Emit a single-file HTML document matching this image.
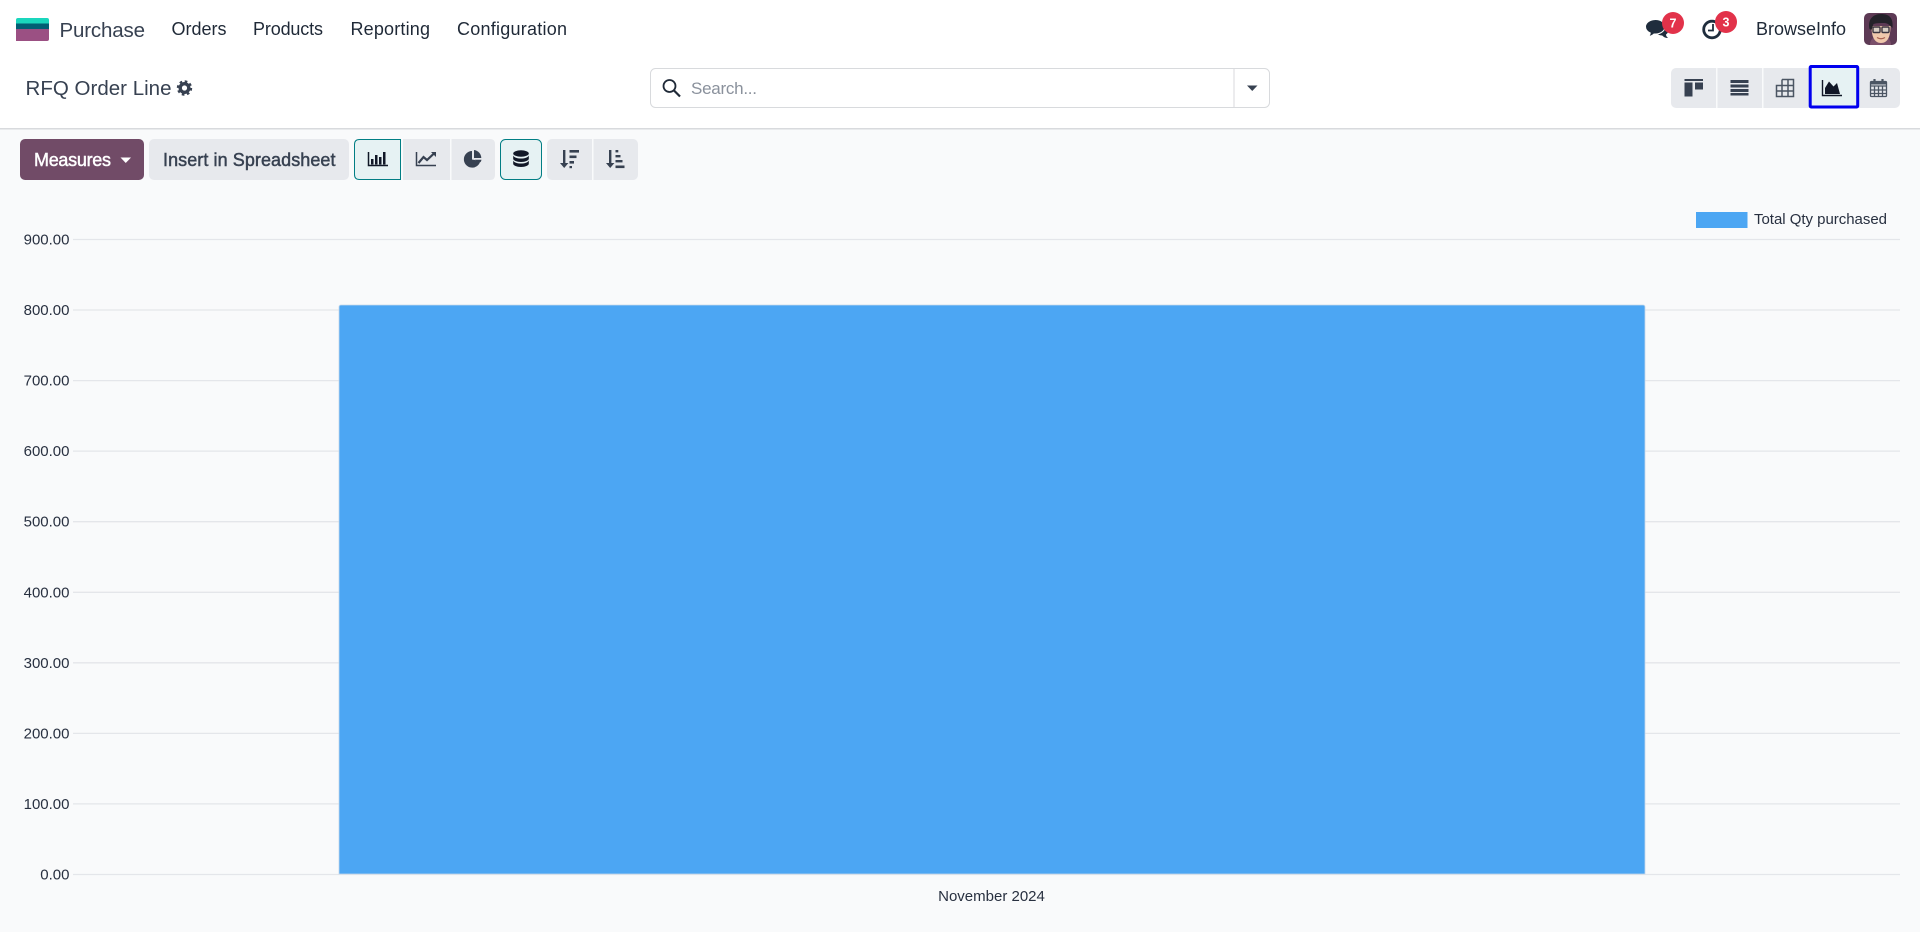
<!DOCTYPE html>
<html lang="en">
<head>
<meta charset="utf-8">
<title>RFQ Order Line</title>
<style>
html,body{margin:0;padding:0;width:1920px;height:932px;overflow:hidden;background:#f9fafb}
svg{display:block}
text{font-family:"Liberation Sans",sans-serif}
</style>
</head>
<body>
<svg xmlns="http://www.w3.org/2000/svg" width="1920" height="932" viewBox="0 0 1920 932">
  <rect width="1920" height="932" fill="#f9fafb"/>
  <rect width="1920" height="128" fill="#fff"/>
  <rect y="128" width="1920" height="1.5" fill="#d8dadd"/>

  <!-- logo -->
  <path d="M16 20q0-2 2-2h29q2 0 2 2v4H16z" fill="#1ad6bd"/>
  <rect x="16" y="23.5" width="33" height="6" fill="#015f74"/>
  <path d="M16 29h33v10q0 2-2 2H16z" fill="#9b5083"/>

  <!-- nav -->
  <text x="59.500" y="37" font-size="20.500" fill="#374151" textLength="85.500">Purchase</text>
  <g font-size="18" fill="#1f2937">
    <text x="171.500" y="35" textLength="55">Orders</text>
    <text x="253" y="35" textLength="70">Products</text>
    <text x="350.500" y="35" textLength="79.500">Reporting</text>
    <text x="457" y="35" textLength="110">Configuration</text>
    <text x="1756" y="35" textLength="90">BrowseInfo</text>
  </g>

  <!-- chat icon -->
  <path d="M1661 24c4.500 0 7.500 2.800 7.500 6 0 2-1 3.500-2.500 4.500 0 1.500 1 2.700 2.200 3.500-2.700 0-4.700-1-6-2.500-3.500 0-6.700-2-6.700-5.500s2-6 5.500-6z" fill="#1f2d3d"/>
  <path d="M1655.500 19.500c5.500 0 9.500 3.300 9.500 7.200s-4 7.300-9.500 7.300h-1.500c-1.500 1.500-3.500 2.300-5.500 2.500 1-1 1.700-2.200 1.800-3.500-2.800-1.300-4.800-3.600-4.800-6.300 0-3.900 4.500-7.200 10-7.200z" fill="#1f2d3d" stroke="#fff" stroke-width="1"/>
  <circle cx="1673" cy="23" r="11" fill="#e2324a"/>
  <text x="1673" y="27.500" font-size="12.500" font-weight="bold" fill="#fff" text-anchor="middle">7</text>

  <!-- clock icon -->
  <circle cx="1712" cy="29.500" r="8.300" fill="none" stroke="#1f2d3d" stroke-width="2.800"/>
  <path d="M1713 24v6.500h-5" fill="none" stroke="#1f2d3d" stroke-width="1.800"/>
  <circle cx="1726" cy="22" r="11" fill="#e2324a"/>
  <text x="1726" y="26.500" font-size="12.500" font-weight="bold" fill="#fff" text-anchor="middle">3</text>

  <!-- avatar -->
  <rect x="1864" y="13" width="33" height="32" rx="5" fill="#5d3a55"/>
  <path d="M1870 45c0-4 2-7 5-8h11c3 1 5 4 5 8z" fill="#7a4f6a"/>
  <path d="M1871.500 26c0 11 3 17 9.500 17s9.500-6 9.500-17z" fill="#f0c8ac"/>
  <path d="M1869.500 29c-2-9 3-15 11.500-15s12.500 4 11.500 14l-2-2c-2-2-4-3-6-3-4 0-8 0-11 1l-2 6z" fill="#24222a"/>
  <rect x="1873" y="27" width="7" height="5.500" rx="1" fill="#d9cfc4" stroke="#3a3440" stroke-width="1.400"/>
  <rect x="1882" y="27" width="7" height="5.500" rx="1" fill="#d9cfc4" stroke="#3a3440" stroke-width="1.400"/>
  <path d="M1877 37.500q4 2.500 8 0" fill="none" stroke="#a8604f" stroke-width="1.200"/>

  <!-- title -->
  <text x="25.500" y="95" font-size="20.500" fill="#374151" textLength="146">RFQ Order Line</text>
  <circle cx="184.500" cy="88" r="4.300" fill="none" stroke="#374151" stroke-width="3.400"/>
  <circle cx="184.500" cy="88" r="6.300" fill="none" stroke="#374151" stroke-width="2.800" stroke-dasharray="2.500 2.450"/>

  <!-- search -->
  <rect x="650.500" y="68.500" width="619" height="39" rx="5" fill="#fff" stroke="#d8dadd"/>
  <rect x="1233.500" y="69" width="1" height="38" fill="#d8dadd"/>
  <circle cx="669.500" cy="86" r="6" fill="none" stroke="#1f2937" stroke-width="1.800"/>
  <path d="M674 90.500l6 6" stroke="#1f2937" stroke-width="2.200"/>
  <text x="691" y="94" font-size="17" fill="#8a919c" textLength="66">Search...</text>
  <path d="M1247 85.500h10.500l-5.250 5.500z" fill="#374151"/>

  <!-- control panel buttons -->
  <rect x="20" y="139" width="124" height="41" rx="5" fill="#714b67"/>
  <text x="34" y="166" font-size="18" fill="#fff" stroke="#fff" stroke-width=".45" textLength="77">Measures</text>
  <path d="M120.500 157.500h10.500l-5.250 5.500z" fill="#fff"/>

  <rect x="149" y="139" width="200" height="41" rx="5" fill="#e7e9ed"/>
  <text x="163" y="166" font-size="18" fill="#374151" stroke="#374151" stroke-width=".45" textLength="172.500">Insert in Spreadsheet</text>

  <!-- chart type group -->
  <path d="M359.500 139.500h41v40h-41q-5 0-5-5v-30q0-5 5-5z" fill="#e6f2f3" stroke="#017e84"/>
  <path d="M403 139h87q5 0 5 5v31q0 5-5 5h-87z" fill="#e7e9ed"/>
  <rect x="450" y="139" width="1.500" height="41" fill="#f9fafb"/>
  <!-- bar -->
  <path d="M368.500 152v13.500H388" fill="none" stroke="#111827" stroke-width="1.500"/>
  <g fill="#111827">
    <rect x="371" y="159" width="2.500" height="5.500"/>
    <rect x="375" y="155" width="2.500" height="9.500"/>
    <rect x="379" y="157" width="2.500" height="7.500"/>
    <rect x="383" y="152" width="2.500" height="12.500"/>
  </g>
  <!-- line -->
  <path d="M416.500 152v13.500H436" fill="none" stroke="#374151" stroke-width="1.500"/>
  <path d="M418.500 163l5-6 3.500 3 7.500-7" fill="none" stroke="#374151" stroke-width="2.200"/>
  <path d="M431 152h5v5z" fill="#374151"/>
  <!-- pie -->
  <path d="M472 151a8.300 8.300 0 1 0 8.300 10L472 159.500z" fill="#374151"/>
  <path d="M474 150a8.300 8.300 0 0 1 7.300 8H474z" fill="#374151"/>
  <path d="M474.500 159.800l7 0a8 8 0 0 1-1 2.500z" fill="#374151"/>

  <!-- stacked -->
  <rect x="500.500" y="139.500" width="41" height="40" rx="5" fill="#e6f2f3" stroke="#017e84"/>
  <g fill="#111827">
    <ellipse cx="521" cy="153.500" rx="7.800" ry="3.200"/>
    <path d="M513.200 155.500c1 2 4 3 7.800 3s6.800-1 7.800-3v3.300c0 1.700-3.500 3.200-7.800 3.200s-7.800-1.500-7.800-3.200z"/>
    <path d="M513.200 160.500c1 2 4 3 7.800 3s6.800-1 7.800-3v3.300c0 1.700-3.500 3.200-7.800 3.200s-7.800-1.500-7.800-3.200z"/>
  </g>

  <!-- sort group -->
  <rect x="547" y="139" width="91" height="41" rx="5" fill="#e7e9ed"/>
  <rect x="592" y="139" width="1.500" height="41" fill="#f9fafb"/>
  <g fill="#374151">
    <rect x="563" y="150" width="2.400" height="16"/>
    <path d="M560 163h8.400l-4.200 5z"/>
    <rect x="569.500" y="150" width="9.500" height="2.600"/>
    <rect x="569.500" y="155.500" width="7" height="2.600"/>
    <rect x="569.500" y="161" width="4.500" height="2.600"/>
    <rect x="569.500" y="166" width="2.500" height="2.200"/>
    <rect x="609" y="150" width="2.400" height="16"/>
    <path d="M606 163h8.400l-4.200 5z"/>
    <rect x="615.500" y="150" width="2.800" height="2.400"/>
    <rect x="615.500" y="155" width="5" height="2.400"/>
    <rect x="615.500" y="160" width="7" height="2.400"/>
    <rect x="615.500" y="165.500" width="9" height="2.600"/>
  </g>

  <!-- view switcher -->
  <rect x="1671" y="68" width="229" height="40" rx="5" fill="#e7e9ed"/>
  <rect x="1716" y="68" width="1.500" height="40" fill="#f9fafb"/>
  <rect x="1762" y="68" width="1.500" height="40" fill="#f9fafb"/>
  <!-- kanban -->
  <g fill="#374151">
    <rect x="1684.500" y="79" width="18.500" height="2"/>
    <rect x="1684.500" y="82.500" width="8" height="14"/>
    <rect x="1695" y="82.500" width="8" height="7"/>
  </g>
  <!-- list -->
  <g fill="#374151">
    <rect x="1730.500" y="80" width="18" height="3"/>
    <rect x="1730.500" y="84.500" width="18" height="3"/>
    <rect x="1730.500" y="89" width="18" height="3"/>
    <rect x="1730.500" y="93" width="18" height="2.500"/>
  </g>
  <!-- pivot -->
  <g fill="none" stroke="#4b5563" stroke-width="1.500">
    <path d="M1782 79.500h11.500v17h-17v-11h17M1776.500 91h17M1782 79.500v17M1788 79.500v17"/>
  </g>
  <!-- graph active -->
  <rect x="1810.200" y="66.500" width="47.500" height="40.500" rx="1" fill="#e6f2f3" stroke="#0000ee" stroke-width="3"/>
  <path d="M1822.500 80v15.500H1842" fill="none" stroke="#111827" stroke-width="1.400"/>
  <path d="M1825 94v-6l4-6.500 4.500 5 3.500-3.500 3 11z" fill="#111827"/>
  <!-- calendar -->
  <g fill="none" stroke="#4b5563" stroke-width="1.300">
    <rect x="1870.500" y="81.500" width="16" height="15" rx="1"/>
    <path d="M1870.500 86h16M1870.500 90h16M1870.500 93.500h16M1874.500 86v10.500M1878.500 86v10.500M1882.500 86v10.500"/>
  </g>
  <path d="M1874.500 79v4M1882.500 79v4" stroke="#4b5563" stroke-width="2.200"/>
  <rect x="1870.500" y="81.500" width="16" height="3" fill="#4b5563"/>

  <!-- grid -->
  <g stroke="#e4e6ea" stroke-width="1.300">
    <path d="M73 239.500H1900"/>
    <path d="M73 310H1900"/>
    <path d="M73 380.600H1900"/>
    <path d="M73 451.100H1900"/>
    <path d="M73 521.700H1900"/>
    <path d="M73 592.300H1900"/>
    <path d="M73 662.800H1900"/>
    <path d="M73 733.400H1900"/>
    <path d="M73 803.900H1900"/>
    <path d="M73 874.500H1900"/>
  </g>
  <!-- axis labels -->
  <g font-size="15" fill="#283040" text-anchor="end">
    <text x="69.500" y="244.500">900.00</text>
    <text x="69.500" y="315">800.00</text>
    <text x="69.500" y="385.600">700.00</text>
    <text x="69.500" y="456.100">600.00</text>
    <text x="69.500" y="526.700">500.00</text>
    <text x="69.500" y="597.300">400.00</text>
    <text x="69.500" y="667.800">300.00</text>
    <text x="69.500" y="738.400">200.00</text>
    <text x="69.500" y="808.900">100.00</text>
    <text x="69.500" y="879.500">0.00</text>
  </g>
  <text x="991.500" y="901" font-size="15" fill="#283040" text-anchor="middle">November 2024</text>

  <!-- bar -->
  <path d="M339 874V307q0-2 2-2h1302q2 0 2 2v567z" fill="#4ca6f3" stroke="#c6d9ea" stroke-width=".8"/>

  <!-- legend -->
  <rect x="1696" y="212" width="51.500" height="16" fill="#4ca6f3"/>
  <text x="1754" y="224" font-size="15" fill="#283040" textLength="133">Total Qty purchased</text>
</svg>
</body>
</html>
